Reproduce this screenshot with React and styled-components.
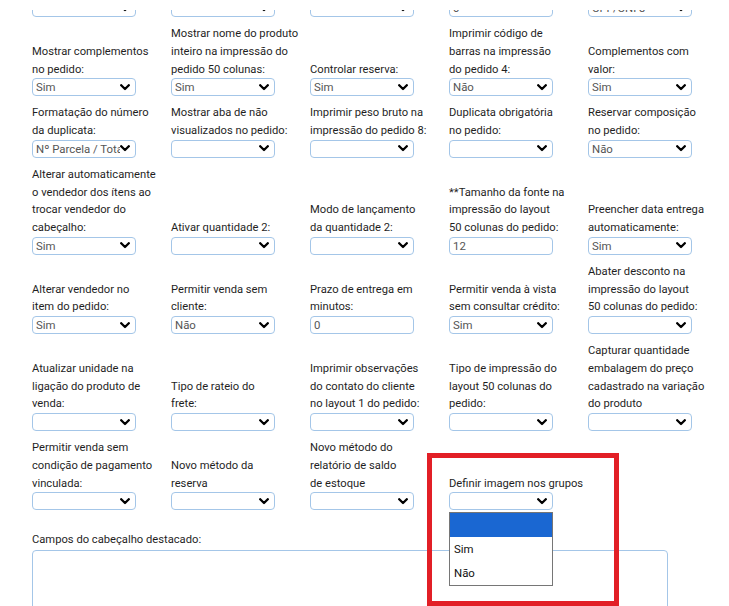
import React from 'react';
import styled, { createGlobalStyle } from 'styled-components';

const GlobalStyle = createGlobalStyle`
  body {
    margin: 0;
    background: #fff;
    font-family: Roboto, 'Liberation Sans', sans-serif;
  }
`;

// each row: 5 columns, label lines + field
const rows = [
  [
    { label: [], value: '' },
    { label: [], value: '' },
    { label: [], value: '' },
    { label: [], value: '0', kind: 'input' },
    { label: [], value: 'CPF/CNPJ' },
  ],
  [
    { label: ['Mostrar complementos', 'no pedido:'], value: 'Sim' },
    { label: ['Mostrar nome do produto', 'inteiro na impressão do', 'pedido 50 colunas:'], value: 'Sim' },
    { label: ['Controlar reserva:'], value: 'Sim' },
    { label: ['Imprimir código de', 'barras na impressão', 'do pedido 4:'], value: 'Não' },
    { label: ['Complementos com', 'valor:'], value: 'Sim' },
  ],
  [
    { label: ['Formatação do número', 'da duplicata:'], value: 'Nº Parcela / Total de Parcelas' },
    { label: ['Mostrar aba de não', 'visualizados no pedido:'], value: '' },
    { label: ['Imprimir peso bruto na', 'impressão do pedido 8:'], value: '' },
    { label: ['Duplicata obrigatória', 'no pedido:'], value: '' },
    { label: ['Reservar composição', 'no pedido:'], value: 'Não' },
  ],
  [
    { label: ['Alterar automaticamente', 'o vendedor dos ítens ao', 'trocar vendedor do', 'cabeçalho:'], value: 'Sim' },
    { label: ['Ativar quantidade 2:'], value: '' },
    { label: ['Modo de lançamento', 'da quantidade 2:'], value: '' },
    { label: ['**Tamanho da fonte na', 'impressão do layout', '50 colunas do pedido:'], value: '12', kind: 'input' },
    { label: ['Preencher data entrega', 'automaticamente:'], value: 'Sim' },
  ],
  [
    { label: ['Alterar vendedor no', 'item do pedido:'], value: 'Sim' },
    { label: ['Permitir venda sem', 'cliente:'], value: 'Não' },
    { label: ['Prazo de entrega em', 'minutos:'], value: '0', kind: 'input' },
    { label: ['Permitir venda à vista', 'sem consultar crédito:'], value: 'Sim' },
    { label: ['Abater desconto na', 'impressão do layout', '50 colunas do pedido:'], value: '' },
  ],
  [
    { label: ['Atualizar unidade na', 'ligação do produto de', 'venda:'], value: '' },
    { label: ['Tipo de rateio do', 'frete:'], value: '' },
    { label: ['Imprimir observações', 'do contato do cliente', 'no layout 1 do pedido:'], value: '' },
    { label: ['Tipo de impressão do', 'layout 50 colunas do', 'pedido:'], value: '' },
    { label: ['Capturar quantidade', 'embalagem do preço', 'cadastrado na variação', 'do produto'], value: '' },
  ],
  [
    { label: ['Permitir venda sem', 'condição de pagamento', 'vinculada:'], value: '' },
    { label: ['Novo método da', 'reserva'], value: '' },
    { label: ['Novo método do', 'relatório de saldo', 'de estoque'], value: '' },
    { label: ['Definir imagem nos grupos'], value: '', open: ['', 'Sim', 'Não'] },
    null,
  ],
];

function Chevron() {
  return (
    <svg width="10" height="7" viewBox="0 0 10 7">
      <path d="M1.2 1.2 L5 5 L8.8 1.2" fill="none" stroke="#000" strokeWidth="2.3" strokeLinecap="round" strokeLinejoin="round" />
    </svg>
  );
}

function Field({ field }) {
  if (!field) return <div />;
  return (
    <FieldWrap>
      {field.label.length > 0 && (
        <Label>
          {field.label.map((l, i) => (
            <span key={i}>
              {l}
              {i < field.label.length - 1 && <br />}
            </span>
          ))}
        </Label>
      )}
      <Box>
        <Value>{field.value}</Value>
        {field.kind !== 'input' && <Chevron />}
      </Box>
      {field.open && (
        <Dropdown>
          {field.open.map((o, i) => (
            <Option key={i} $active={i === 0}>
              {o}
            </Option>
          ))}
        </Dropdown>
      )}
    </FieldWrap>
  );
}

export default function App() {
  return (
    <>
      <GlobalStyle />
      <Page>
        <TopCover />
        <Viewport>
          <Form>
            <Rows>
              {rows.map((row, r) => (
                <Row key={r}>
                  {row.map((f, c) => (
                    <Field key={c} field={f} />
                  ))}
                </Row>
              ))}
            </Rows>
            <SectionLabel>Campos do cabeçalho destacado:</SectionLabel>
            <TextArea readOnly />
          </Form>
        </Viewport>
        <Highlight />
      </Page>
    </>
  );
}

const Page = styled.div`
  width: 729px;
  height: 606px;
  overflow: hidden;
  position: relative;
  background: #fff;
`;

const TopCover = styled.div`
  height: 10px;
  background: #fff;
`;

const Viewport = styled.div`
  height: 596px;
  overflow: hidden;
`;

const Form = styled.div`
  margin-top: -11px;
  padding-left: 32px;
`;

const Rows = styled.div`
  display: flex;
  flex-direction: column;
  gap: 8.2px;
`;

const Row = styled.div`
  display: grid;
  grid-template-columns: repeat(5, 139px);
  align-items: end;
`;

const FieldWrap = styled.div`
  display: flex;
  flex-direction: column;
  position: relative;
`;

const Label = styled.div`
  font-size: 11.2px;
  line-height: 17.7px;
  color: #1f1f1f;
  white-space: nowrap;
`;

const Box = styled.div`
  box-sizing: border-box;
  width: 104px;
  height: 18px;
  border: 1px solid #a4c6e8;
  border-radius: 4px;
  display: flex;
  align-items: center;
  justify-content: space-between;
  padding: 0 5px 0 3px;
  background: #fff;
  svg {
    flex-shrink: 0;
  }
`;

const Value = styled.span`
  font-size: 11.4px;
  color: #555;
  white-space: nowrap;
  overflow: hidden;
  flex: 1;
`;

const Dropdown = styled.div`
  position: absolute;
  top: calc(100% + 2px);
  left: 0;
  width: 104px;
  box-sizing: border-box;
  border: 1px solid #767676;
  background: #fff;
  z-index: 2;
`;

const Option = styled.div`
  height: 24px;
  line-height: 24px;
  padding-left: 4px;
  font-size: 11.4px;
  color: #111;
  background: ${props => (props.$active ? '#1a67d2' : '#fff')};
`;

const SectionLabel = styled.div`
  margin-top: 21px;
  margin-bottom: 1px;
  font-size: 11.2px;
  line-height: 17.7px;
  color: #1f1f1f;
`;

const TextArea = styled.textarea`
  display: block;
  box-sizing: border-box;
  width: 636px;
  height: 120px;
  border: 1px solid #a4c6e8;
  border-radius: 4px;
  resize: none;
  outline: none;
`;

const Highlight = styled.div`
  position: absolute;
  left: 427px;
  top: 453px;
  width: 192px;
  height: 153px;
  box-sizing: border-box;
  border: 5px solid #e21f26;
  pointer-events: none;
  z-index: 3;
`;
